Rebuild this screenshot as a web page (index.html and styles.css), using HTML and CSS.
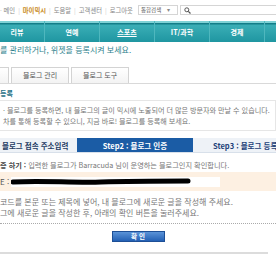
FILE: index.html
```html
<!DOCTYPE html>
<html lang="ko">
<head>
    <meta charset="UTF-8">
    <meta name="viewport" content="width=device-width, initial-scale=1.0">
    <title>블로그 등록</title>
    <link rel="stylesheet" href="styles.css">
</head>
<body>
    <div class="gnb">
        <div class="gnb-links">
            <span class="dot">·</span> <a href="#">메인</a><i>|</i><a href="#" class="on">마이믹시</a><i>|</i><a href="#">도움말</a><i>|</i><a href="#">고객센터</a><i>|</i><a href="#">로그아웃</a>
        </div>
        <div class="search">
            <span class="search-select">통합검색 <b>▾</b></span>
            <span class="search-input">
                <svg width="7" height="7" viewBox="0 0 7 7"><circle cx="2.8" cy="2.8" r="2" fill="none" stroke="#555" stroke-width="1"/><line x1="4.3" y1="4.3" x2="6.5" y2="6.5" stroke="#555" stroke-width="1.2"/></svg>
            </span>
        </div>
    </div>

    <ul class="nav">
        <li>리뷰</li>
        <li>연예</li>
        <li class="active">스포츠</li>
        <li>IT/과학</li>
        <li>경제</li>
        <li></li>
    </ul>

    <p class="desc">를 관리하거나, 위젯을 등록시켜 보세요.</p>

    <div class="tabs">
        <span class="tab tab-cut"></span>
        <span class="tab">블로그 관리</span>
        <span class="tab">블로그 도구</span>
    </div>

    <h3 class="sub">등록</h3>

    <div class="notice">
        <p>· 블로그를 등록하면, 내 블로그의 글이 믹시에 노출되어 더 많은 방문자와 만날 수 있습니다.</p>
        <p>차를 통해 등록할 수 있으니, 지금 바로! 블로그를 등록해 보세요.</p>
    </div>

    <div class="steps">
        <span class="step step1">블로그 접속 주소입력</span>
        <span class="step step2">Step2 : 블로그 인증</span>
        <span class="step step3">Step3 : 블로그 등록</span>
    </div>

    <p class="guide"><strong>증 하기 :</strong> 입력한 블로그가 Barracuda 님이 운영하는 블로그인지 확인합니다.</p>

    <div class="form-row">
        <span class="label">E :</span>
        <span class="code-box">
            <svg width="180" height="8" viewBox="0 0 180 8"><path d="M2 4 C30 2, 60 5, 90 4 S150 3, 177 3" fill="none" stroke="#000" stroke-width="5" stroke-linecap="round"/></svg>
        </span>
    </div>

    <div class="help">
        <p>코드를 본문 또는 제목에 넣어, 내 블로그에 새로운 글을 작성해 주세요.</p>
        <p>그에 새로운 글을 작성한 후, 아래의 확인 버튼을 눌러주세요.</p>
    </div>

    <div class="btn-area">
        <button class="btn-ok">확 인</button>
    </div>

    <div class="foot-line"></div>
</body>
</html>
```

FILE: styles.css
```css
body {
    margin: 0;
    width: 276px;
    height: 260px;
    overflow: hidden;
    background: #fff;
    font-family: "Noto Sans CJK KR", "Noto Sans", sans-serif;
    font-size: 8px;
    color: #777;
}
p {
    margin: 0;
}
a {
    color: #888;
    text-decoration: none;
}

/* top links + search */
.gnb {
    height: 21px;
    display: flex;
    align-items: center;
    justify-content: space-between;
    padding-bottom: 1px;
    box-sizing: border-box;
}
.gnb-links {
    font-size: 6.3px;
    color: #999;
    white-space: nowrap;
}
.gnb-links i {
    font-style: normal;
    color: #ccc;
    margin: 0 3px;
}
.gnb-links .on {
    color: #c98a1e;
    font-weight: bold;
}
.dot {
    color: #aaa;
}
.search {
    display: flex;
    gap: 2px;
}
.search-select {
    width: 40px;
    height: 10px;
    border: 1px solid #d5d5d5;
    box-sizing: border-box;
    font-size: 5.5px;
    line-height: 8px;
    padding-left: 2px;
    color: #555;
}
.search-select b {
    font-weight: normal;
    color: #888;
    margin-left: 4px;
}
.search-input {
    width: 96px;
    height: 10px;
    border: 1px solid #d5d5d5;
    border-right: none;
    box-sizing: border-box;
    display: flex;
    align-items: center;
    padding-left: 3px;
}

/* main nav */
.nav {
    list-style: none;
    margin: 0 0 0 -10px;
    padding: 0;
    height: 21px;
    display: flex;
    overflow: hidden;
    background: linear-gradient(#7fd2d6 0, #7fd2d6 2px, #137d88 2px, #137d88 3px, #3aaeb6 4px, #1f96a1 100%);
}
.nav li {
    flex: 0 0 55px;
    text-align: center;
    color: #fff;
    font-weight: bold;
    font-size: 7px;
    line-height: 23px;
    border-right: 1px solid #4fb7be;
    box-sizing: border-box;
}
.nav li.active {
    text-decoration: underline;
}

.desc {
    height: 25px;
    line-height: 16px;
    color: #2c7f8c;
}

/* tabs */
.tabs {
    display: flex;
    height: 17px;
    border-bottom: 1px solid #d9d9d9;
    box-sizing: border-box;
    gap: 2px;
}
.tab {
    height: 16px;
    border: 1px solid #d3d3d3;
    border-bottom: none;
    background: linear-gradient(#ffffff, #f3f3f3);
    box-sizing: border-box;
    width: 58px;
    padding-left: 11px;
    line-height: 15px;
    font-size: 7px;
    color: #555;
}
.tab-cut {
    width: 9px;
    border-left: none;
    padding: 0;
}

.sub {
    margin: 0;
    height: 16px;
    padding-top: 3px;
    box-sizing: border-box;
    font-size: 7px;
    line-height: 12px;
    color: #1f6f86;
}

.notice {
    border: 1px solid #e6e6e6;
    border-left: none;
    padding: 4px 0 3px 3px;
    font-size: 7.1px;
    line-height: 11px;
    color: #777;
    white-space: nowrap;
    margin-bottom: 7px;
}

/* steps */
.steps {
    display: flex;
    height: 15px;
    background: #eef2f7;
    border-bottom: 1px solid #d8e0ea;
    box-sizing: border-box;
    font-size: 7.5px;
    font-weight: bold;
    line-height: 15px;
    white-space: nowrap;
    overflow: hidden;
}
.step {
    flex: none;
}
.step1 {
    width: 77px;
    padding-left: 2px;
    box-sizing: border-box;
    color: #243b63;
}
.step2 {
    width: 116px;
    background: #1b5ca5;
    color: #fff;
    text-align: center;
}
.step3 {
    padding-left: 20px;
    color: #1c3f78;
}

.guide {
    height: 19px;
    padding-top: 6px;
    box-sizing: border-box;
    font-size: 7.2px;
    line-height: 12px;
    white-space: nowrap;
}
.guide strong {
    color: #444;
}

.form-row {
    height: 19px;
    background: #fdf0e2;
    display: flex;
    align-items: center;
    gap: 2px;
}
.label {
    color: #555;
}
.code-box {
    width: 209px;
    height: 10px;
    background: #fff;
    display: flex;
    align-items: center;
}

.help {
    height: 33px;
    padding-top: 5px;
    box-sizing: border-box;
    line-height: 11px;
    white-space: nowrap;
    border-bottom: 1px dotted #aaa;
}

.btn-area {
    height: 28px;
    padding-top: 6px;
    box-sizing: border-box;
    text-align: center;
}
.btn-ok {
    width: 53px;
    height: 11px;
    padding: 0;
    border: 1px solid #1d4f96;
    background: linear-gradient(#5a93d8, #2360b4);
    color: #fff;
    font-family: inherit;
    font-weight: bold;
    font-size: 6.5px;
    line-height: 9px;
}

.foot-line {
    width: 268px;
    height: 2px;
    background: #dcdcdc;
}
```
